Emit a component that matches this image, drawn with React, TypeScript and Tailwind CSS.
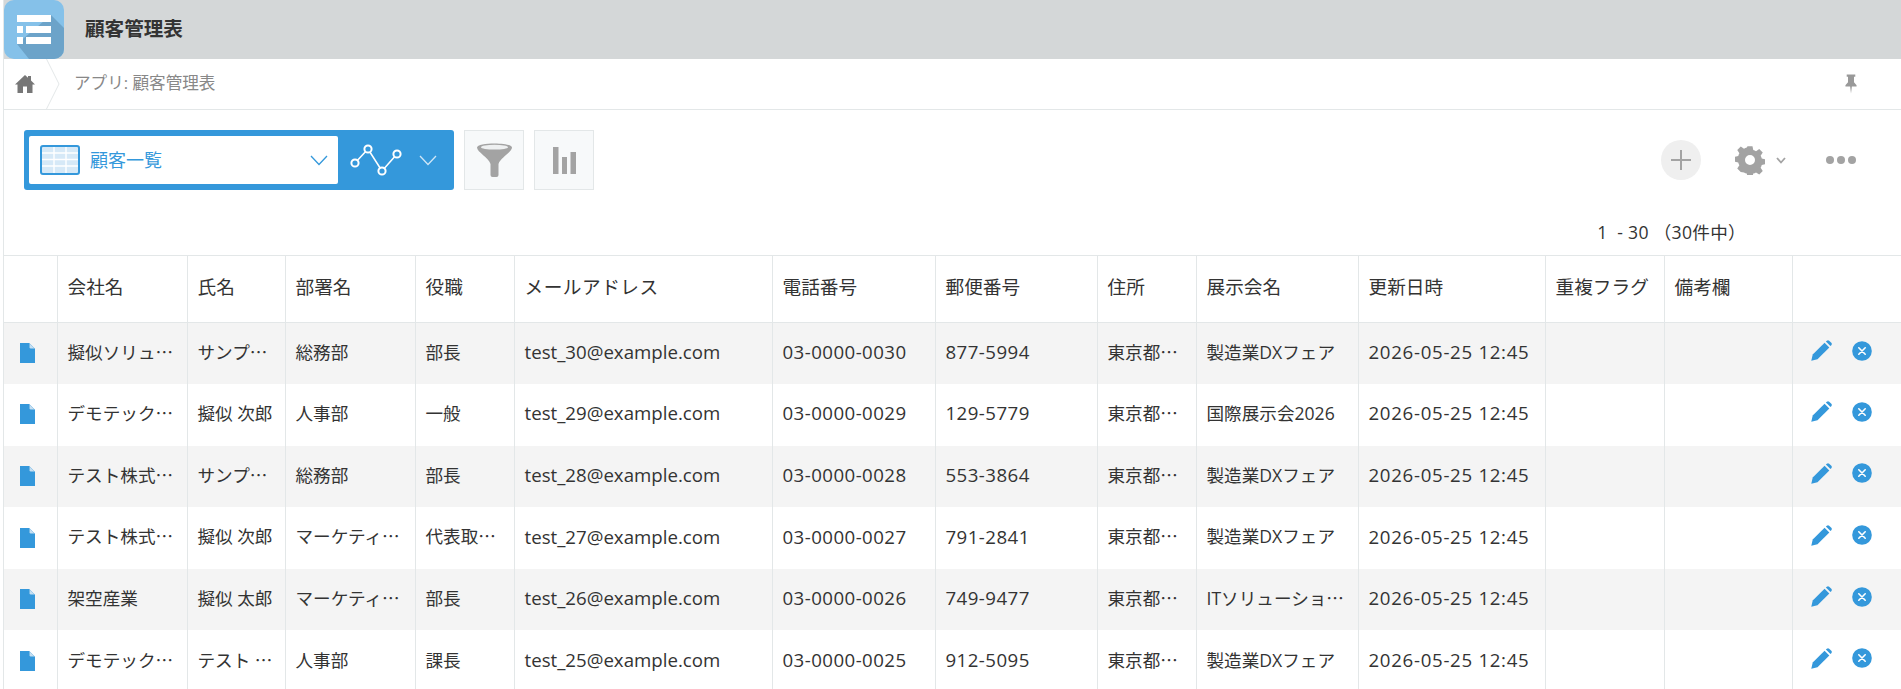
const font = { fontFamily: '"Open Sans", "Noto Sans CJK JP", sans-serif' }

const colWidths = [53, 130, 98, 130, 99, 258, 163, 162, 99, 162, 187, 119, 128, 109]
const headers = ['', '会社名', '氏名', '部署名', '役職', 'メールアドレス', '電話番号', '郵便番号', '住所', '展示会名', '更新日時', '重複フラグ', '備考欄', '']

const rows = [
  ['擬似ソリュ…', 'サンプ…', '総務部', '部長', 'test_30@example.com', '03-0000-0030', '877-5994', '東京都…', '製造業DXフェア'],
  ['デモテック…', '擬似 次郎', '人事部', '一般', 'test_29@example.com', '03-0000-0029', '129-5779', '東京都…', '国際展示会2026'],
  ['テスト株式…', 'サンプ…', '総務部', '部長', 'test_28@example.com', '03-0000-0028', '553-3864', '東京都…', '製造業DXフェア'],
  ['テスト株式…', '擬似 次郎', 'マーケティ…', '代表取…', 'test_27@example.com', '03-0000-0027', '791-2841', '東京都…', '製造業DXフェア'],
  ['架空産業', '擬似 太郎', 'マーケティ…', '部長', 'test_26@example.com', '03-0000-0026', '749-9477', '東京都…', 'ITソリューショ…'],
  ['デモテック…', 'テスト …', '人事部', '課長', 'test_25@example.com', '03-0000-0025', '912-5095', '東京都…', '製造業DXフェア'],
]

function cellClass(i: number) {
  if (i === 4) return 'text-[18.67px]'
  if (i === 5 || i === 6) return 'text-[18.67px] tracking-[0.45px]'
  return 'text-[17.6px]'
}

function Cut({ text }: { text: string }) {
  if (!text.endsWith('…')) return <>{text}</>
  return (
    <>
      {text.slice(0, -1)}
      <span className="font-['Noto_Sans_CJK_JP']">…</span>
    </>
  )
}

function AppIcon() {
  return (
    <svg width="60" height="59" viewBox="0 0 60 59" className="shrink-0">
      <path d="M0 10 A10 10 0 0 1 10 0 H50 A10 10 0 0 1 60 10 V49 A10 10 0 0 1 50 59 H10 A10 10 0 0 1 0 49 Z" fill="#85c1e9" />
      <path d="M47 15 L60 28 V49 A10 10 0 0 1 50 59 H25 L13 44 Z" fill="#6ca3c9" />
      <rect x="13" y="15" width="34" height="7" fill="#fff" />
      <rect x="13" y="26" width="6" height="7" fill="#fff" />
      <rect x="22" y="26" width="25" height="7" fill="#fff" />
      <rect x="13" y="37" width="6" height="7" fill="#fff" />
      <rect x="22" y="37" width="25" height="7" fill="#fff" />
    </svg>
  )
}

function DocIcon() {
  return (
    <svg width="15" height="20" viewBox="0 0 18 24" className="block">
      <path d="M0 0 H11 L18 7 V24 H0 Z" fill="#3498db" />
      <path d="M11.5 0.5 L17.5 6.5 H13 A1.5 1.5 0 0 1 11.5 5 Z" fill="#c5dff2" />
    </svg>
  )
}

function PencilIcon() {
  return (
    <svg width="21" height="21" viewBox="0 0 22 22" className="block">
      <path d="M0.3 21.7 L1.8 15.2 L14.2 2.8 L19.2 7.8 L6.8 20.2 Z" fill="#3498db" />
      <path d="M15.6 1.6 L16.6 0.7 A1.8 1.8 0 0 1 19 0.7 L21.3 3 A1.8 1.8 0 0 1 21.3 5.4 L20.4 6.4 Z" fill="#3498db" />
    </svg>
  )
}

function RemoveIcon() {
  return (
    <svg width="20" height="20" viewBox="0 0 20 20" className="block">
      <circle cx="10" cy="10" r="9.8" fill="#3498db" />
      <path d="M6.8 6.8 L13.2 13.2 M13.2 6.8 L6.8 13.2" stroke="#fff" strokeWidth="1.6" strokeLinecap="round" />
    </svg>
  )
}

function Chevron({ className, color }: { className?: string; color: string }) {
  return (
    <svg width="18" height="11" viewBox="0 0 18 11" className={className}>
      <path d="M1 1 L9 9.5 L17 1" fill="none" stroke={color} strokeWidth="1.3" />
    </svg>
  )
}

export default function App() {
  return (
    <div className="h-[689px] w-[1901px] overflow-hidden bg-white pl-[3px] text-[#333]" style={font}>
      <div className="h-full border-l border-[#e3e7e8]">
        {/* App header */}
        <div className="flex h-[59px] items-center bg-[#d4d7d8]">
          <AppIcon />
          <h1 className="ml-[21px] pb-[2px] text-[19.6px] font-bold text-[#333]">顧客管理表</h1>
        </div>

        {/* Breadcrumb */}
        <div className="flex h-[51px] items-center border-b border-[#e3e7e8]">
          <div className="relative flex h-full w-[58px] items-center pl-[11px]">
            <svg width="20" height="20" viewBox="0 0 20 20">
              <path d="M10 1 L13 3.8 V2 H16 V6.6 L20 10.4 H17.5 V19 H12 V12.5 H8 V19 H2.5 V10.4 H0 Z" fill="#777" />
            </svg>
            <svg width="14" height="50" viewBox="0 0 14 50" className="absolute left-[42px] top-0">
              <path d="M0.5 0 L13 25 L0.5 50" fill="none" stroke="#e3e7e8" strokeWidth="1" />
            </svg>
          </div>
          <span className="ml-[12px] pb-[2px] text-[16.6px] text-[#888]">アプリ: 顧客管理表</span>
          <svg width="12" height="20" viewBox="0 0 14 22" className="ml-auto mr-[44px]">
            <path d="M2 0 H12 V2.5 H10.5 V9 L13.5 12.5 V14 H8 L7 22 L6 14 H0.5 V12.5 L3.5 9 V2.5 H2 Z" fill="#999" />
          </svg>
        </div>

        {/* Toolbar */}
        <div className="flex h-[83px] items-start pl-[20px] pr-[45px] pt-[20px]">
          <div className="flex h-[60px] w-[430px] items-center rounded-[3px] bg-[#3498db] pl-[5px]">
            <div className="flex h-[48px] w-[309px] items-center rounded-[2px] bg-white pl-[11px] pr-[10px]">
              <svg width="40" height="30" viewBox="0 0 40 30" className="shrink-0">
                <rect x="1" y="1" width="38" height="28" rx="2" fill="#d6e9f7" stroke="#3498db" strokeWidth="2" />
                <path d="M2 8 H38 M2 14.5 H38 M2 21 H38 M14 2 V28 M26 2 V28" stroke="#fff" strokeWidth="1.4" />
              </svg>
              <span className="ml-[10px] text-[18px] text-[#3498db]">顧客一覧</span>
              <Chevron className="ml-auto" color="#3498db" />
            </div>
            <svg width="52" height="36" viewBox="0 0 52 36" className="ml-[12px]">
              <path d="M5 21 L18 7 L32 29 L47 12" fill="none" stroke="#fff" strokeWidth="1.6" />
              <circle cx="5" cy="21" r="3.6" fill="#3498db" stroke="#fff" strokeWidth="2" />
              <circle cx="18" cy="7" r="3.6" fill="#3498db" stroke="#fff" strokeWidth="2" />
              <circle cx="32" cy="29" r="3.6" fill="#3498db" stroke="#fff" strokeWidth="2" />
              <circle cx="47" cy="12" r="3.6" fill="#3498db" stroke="#fff" strokeWidth="2" />
            </svg>
            <Chevron className="ml-[17px]" color="#cfe6f7" />
          </div>
          <div className="ml-[10px] flex h-[60px] w-[60px] items-center justify-center border border-[#e3e7e8] bg-[#f7f9fa]">
            <svg width="35" height="34" viewBox="0 0 35 34">
              <path d="M0 4.5 C0 -1 35 -1 35 4.5 C35 9 23 15 21.5 21 V32 A2 2 0 0 1 19.5 34 H15.5 A2 2 0 0 1 13.5 32 V21 C12 15 0 9 0 4.5 Z" fill="#a3a3a3" />
              <ellipse cx="17.5" cy="4.2" rx="13.5" ry="2.4" fill="#eef0f1" />
            </svg>
          </div>
          <div className="ml-[10px] flex h-[60px] w-[60px] items-center justify-center border border-[#e3e7e8] bg-[#f7f9fa]">
            <svg width="23" height="27" viewBox="0 0 23 27">
              <rect x="0" y="0" width="5.5" height="27" fill="#a3a3a3" />
              <rect x="9" y="10" width="5" height="17" fill="#a3a3a3" />
              <rect x="17.5" y="5" width="5.5" height="22" fill="#a3a3a3" />
            </svg>
          </div>

          <div className="ml-auto flex h-[60px] items-center">
            <div className="flex h-[40px] w-[40px] items-center justify-center rounded-full bg-[#efefef]">
              <svg width="20" height="20" viewBox="0 0 20 20">
                <path d="M10 0 V20 M0 10 H20" stroke="#a3a3a3" strokeWidth="2" />
              </svg>
            </div>
            <svg width="30" height="30" viewBox="0 0 24 24" className="ml-[34px]">
              <path
                fill="#a3a3a3"
                fillRule="evenodd"
                d="M10 1h4l.6 3a8.4 8.4 0 0 1 2.2.9l2.6-1.7 2.8 2.8-1.7 2.6c.4.7.7 1.4.9 2.2l3 .6v4l-3 .6a8.4 8.4 0 0 1-.9 2.2l1.7 2.6-2.8 2.8-2.6-1.7a8.4 8.4 0 0 1-2.2.9l-.6 3h-4l-.6-3a8.4 8.4 0 0 1-2.2-.9L4.6 21.6 1.8 18.8l1.7-2.6a8.4 8.4 0 0 1-.9-2.2l-3-.6V9.4l3-.6c.2-.8.5-1.5.9-2.2L1.8 4l2.8-2.8 2.6 1.7a8.4 8.4 0 0 1 2.2-.9zM12 8a4 4 0 1 0 0 8 4 4 0 0 0 0-8z"
              />
            </svg>
            <svg width="10" height="7" viewBox="0 0 10 7" className="ml-[11px]">
              <path d="M1 1 L5 5.5 L9 1" fill="none" stroke="#a3a3a3" strokeWidth="1.8" />
            </svg>
            <div className="ml-[40px] flex gap-[3px]">
              <span className="h-[8px] w-[8px] rounded-full bg-[#a3a3a3]" />
              <span className="h-[8px] w-[8px] rounded-full bg-[#a3a3a3]" />
              <span className="h-[8px] w-[8px] rounded-full bg-[#a3a3a3]" />
            </div>
          </div>
        </div>

        {/* Pager */}
        <div className="flex h-[62px] items-start justify-end whitespace-pre pr-[155px] pt-[26px] text-[17.6px] leading-[26px] tracking-[0.3px]">
          {'1  - 30 （30件中）'}
        </div>

        {/* Records */}
        <table className="w-[1897px] table-fixed border-collapse text-[18.67px]">
          <colgroup>
            {colWidths.map((w, i) => (
              <col key={i} style={{ width: w }} />
            ))}
          </colgroup>
          <thead>
            <tr className="h-[67px]">
              {headers.map((h, i) => (
                <th
                  key={i}
                  className={`whitespace-nowrap border border-l-0 border-[#e3e7e8] px-[10px] pb-[5px] text-left font-normal last:border-r-0 ${i === 5 ? 'tracking-[0.5px]' : ''}`}
                >
                  {h}
                </th>
              ))}
            </tr>
          </thead>
          <tbody>
            {rows.map((row, r) => (
              <tr key={r} className={r % 2 === 0 ? 'h-[61.6px] bg-[#f4f4f4]' : 'h-[61.6px] bg-white'}>
                <td className="border-r border-[#e3e7e8] pb-[1px] pl-[16px]">
                  <DocIcon />
                </td>
                {row.map((c, i) => (
                  <td key={i} className={`whitespace-nowrap border-r border-[#e3e7e8] px-[10px] pb-[3px] ${cellClass(i)}`}>
                    <Cut text={c} />
                  </td>
                ))}
                <td className="whitespace-nowrap border-r border-[#e3e7e8] px-[10px] pb-[3px] tracking-[0.7px]">2026-05-25 12:45</td>
                <td className="border-r border-[#e3e7e8]" />
                <td className="border-r border-[#e3e7e8]" />
                <td>
                  <div className="flex items-center justify-end gap-[20px] pb-[6px] pr-[29px]">
                    <PencilIcon />
                    <RemoveIcon />
                  </div>
                </td>
              </tr>
            ))}
          </tbody>
        </table>
      </div>
    </div>
  )
}
